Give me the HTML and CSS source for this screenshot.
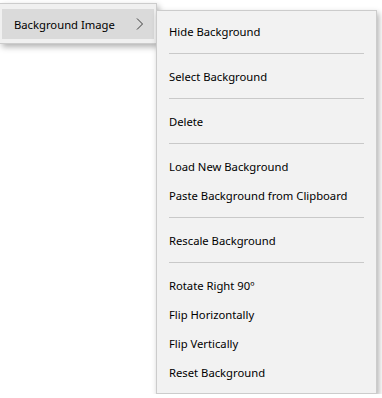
FILE: index.html
```html
<!DOCTYPE html>
<html lang="en">
<head>
    <meta charset="UTF-8">
    <meta name="viewport" content="width=device-width, initial-scale=1.0">
    <title>Background Image Menu</title>
    <link rel="stylesheet" href="styles.css">
</head>
<body>
    <div class="menus">
        <div class="menu parent-menu">
            <div class="menu-item active">
                <span>Background Image</span>
                <svg class="chevron" width="8" height="12" viewBox="0 0 8 12">
                    <path d="M1 0.5 L6.5 6 L1 11.5" fill="none" stroke="#3a3a3a" stroke-width="1"/>
                </svg>
            </div>
        </div>

        <div class="menu sub-menu">
            <div class="menu-item">Hide Background</div>
            <div class="separator"></div>
            <div class="menu-item">Select Background</div>
            <div class="separator"></div>
            <div class="menu-item">Delete</div>
            <div class="separator"></div>
            <div class="menu-item">Load New Background</div>
            <div class="menu-item">Paste Background from Clipboard</div>
            <div class="separator"></div>
            <div class="menu-item">Rescale Background</div>
            <div class="separator"></div>
            <div class="menu-item">Rotate Right 90º</div>
            <div class="menu-item">Flip Horizontally</div>
            <div class="menu-item">Flip Vertically</div>
            <div class="menu-item">Reset Background</div>
        </div>
    </div>
</body>
</html>
```

FILE: styles.css
```css
body {
    font-family: 'Segoe UI', 'Noto Sans', sans-serif;
    font-size: 11.25px;
    background: #ffffff;
    margin: 0;
    padding: 0;
    color: #000000;
}

.menus {
    display: flex;
    flex-direction: row;
    align-items: flex-start;
}

.menu {
    background-color: #f0f0f0;
    border: 1px solid #cccccc;
    box-shadow: 2px 3px 6px rgba(0, 0, 0, 0.3);
}

.parent-menu {
    margin-top: 3px;
    width: 152px;
    padding: 5px 2px 4px 2px;
    border-left: none;
}

.parent-menu .menu-item {
    height: 30px;
    display: flex;
    align-items: center;
    justify-content: space-between;
    padding: 0 10px 0 12px;
}

.menu-item.active {
    background-color: #dadada;
}

.chevron {
    display: block;
}

.sub-menu {
    position: relative;
    margin-top: 10px;
    margin-left: -1px;
    width: 219px;
    padding: 6px 0 6px 0;
    background-color: #f2f2f2;
}

.sub-menu .menu-item {
    height: 29px;
    line-height: 29px;
    padding: 0 12px;
    white-space: nowrap;
}

.separator {
    height: 1px;
    margin: 7px 12px 8px 12px;
    background-color: #c9c9c9;
}
```
